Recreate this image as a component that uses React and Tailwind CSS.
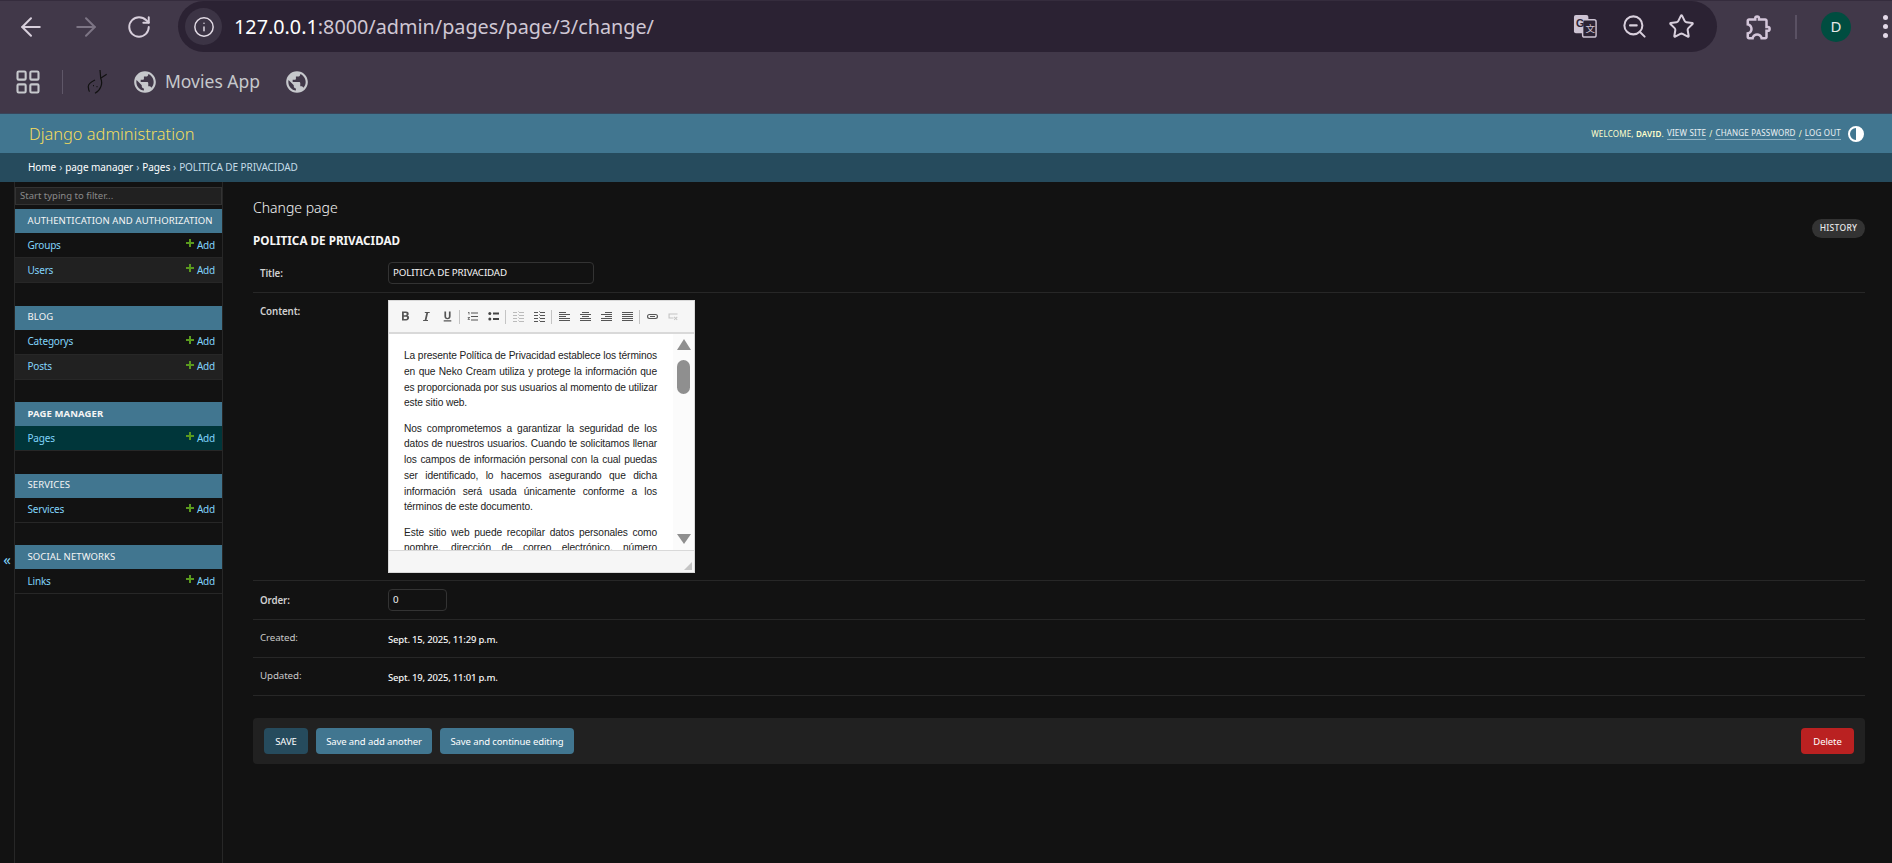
import React from 'react';
import { ArrowLeft, ArrowRight, RotateCw, Info, ZoomOut, Star, LayoutGrid } from 'lucide-react';
import { MdPublic, MdOutlineExtension } from 'react-icons/md';

const sections = [
  { name: 'Authentication and Authorization', models: ['Groups', 'Users'] },
  { name: 'Blog', models: ['Categorys', 'Posts'] },
  { name: 'Page manager', models: ['Pages'], current: true },
  { name: 'Services', models: ['Services'] },
  { name: 'Social Networks', models: ['Links'] },
];

// line breaks as in the editor, the last line of a paragraph is not stretched
const paragraphs = [
  {
    lines: [
      'La presente Política de Privacidad establece los términos',
      'en que Neko Cream utiliza y protege la información que',
      'es proporcionada por sus usuarios al momento de utilizar',
    ],
    last: 'este sitio web.',
  },
  {
    lines: [
      'Nos comprometemos a garantizar la seguridad de los',
      'datos de nuestros usuarios. Cuando te solicitamos llenar',
      'los campos de información personal con la cual puedas',
      'ser identificado, lo hacemos asegurando que dicha',
      'información será usada únicamente conforme a los',
    ],
    last: 'términos de este documento.',
  },
  {
    lines: [
      'Este sitio web puede recopilar datos personales como',
      'nombre, dirección de correo electrónico, número',
    ],
  },
];

const Sep = () => <span className="w-px h-[14px] bg-[#c4c4c4] mx-[1.5px] shrink-0" />;

const ToolIcon = ({ children, className = 'text-[#555]' }) => (
  <svg viewBox="0 0 11 11" className={`w-[11px] h-[11px] mx-[5px] shrink-0 ${className}`} fill="currentColor">
    {children}
  </svg>
);

const bars = (rows) => rows.map(([x, y, w], i) => <rect key={i} x={x} y={y} width={w} height="1" />);

const outdentRows = [[0, 1, 4], [0, 4, 4], [0, 7, 4], [0, 10, 4], [6, 1, 5], [6, 4, 5], [6, 7, 5], [6, 10, 5], [5, 0, 0.6], [5, 3, 0.6], [5, 6, 0.6], [5, 9, 0.6]];

const Toolbar = () => (
  <div className="h-[33px] shrink-0 bg-[#f6f6f6] border-b-2 border-[#d9d9d9] flex items-center pl-[5.5px]">
    <ToolIcon><path d="M2 .5h4c1.7 0 2.7.8 2.7 2.2 0 .9-.5 1.6-1.2 1.8 1 .2 1.6 1 1.6 2.1C9.100 8.300 8 9.500 6.100 9.500H2v-9zm1.800 1.500v2.200h1.700c.8 0 1.200-.4 1.200-1.100S6.300 2 5.500 2H3.800zm0 3.700v2.300h2c.8 0 1.300-.4 1.300-1.200s-.5-1.100-1.300-1.100h-2z" /></ToolIcon>
    <ToolIcon><path d="M3.800 1h4.900v1.100H7.100L5.500 8.900h1.500V10H2.100V8.900h1.600l1.600-6.800H3.800V1z" /></ToolIcon>
    <ToolIcon><path d="M2.400.5h1.700v4.700c0 1.100.5 1.700 1.400 1.700s1.400-.6 1.400-1.700V.5h1.700v4.800c0 2-1.200 3-3.100 3s-3.100-1-3.100-3V.5zM1.700 9.300h7.600v1.100H1.700z" /></ToolIcon>
    <Sep />
    <ToolIcon><path d="M1 1h1.400v2.400h-.8V1.700H1zM.7 6h2.200v.8L1.700 8h1.200v.8H.7V8l1.300-1.200H.7zM4 1.500h7v1H4zM4 5h7v1H4zM4 8.500h7v1H4z" /></ToolIcon>
    <ToolIcon className="text-[#444]"><circle cx="1.800" cy="2.500" r="1.500" /><circle cx="1.800" cy="8" r="1.500" /><rect x="5" y="1.500" width="6" height="2" /><rect x="5" y="7" width="6" height="2" /></ToolIcon>
    <Sep />
    <ToolIcon className="text-[#bbb]">{bars(outdentRows)}</ToolIcon>
    <ToolIcon>{bars(outdentRows)}</ToolIcon>
    <Sep />
    <ToolIcon>{bars([[0, 1, 7], [0, 3, 11], [0, 5, 7], [0, 7, 11], [0, 9, 11]])}</ToolIcon>
    <ToolIcon>{bars([[2, 1, 7], [0, 3, 11], [2, 5, 7], [0, 7, 11], [0, 9, 11]])}</ToolIcon>
    <ToolIcon>{bars([[4, 1, 7], [0, 3, 11], [4, 5, 7], [0, 7, 11], [0, 9, 11]])}</ToolIcon>
    <ToolIcon>{bars([[0, 1, 11], [0, 3, 11], [0, 5, 11], [0, 7, 11], [0, 9, 11]])}</ToolIcon>
    <Sep />
    <ToolIcon><path d="M2.500 3h6a2.500 2.500 0 0 1 0 5h-6a2.500 2.500 0 0 1 0-5zm0 1.100a1.400 1.400 0 0 0 0 2.800h6a1.400 1.400 0 0 0 0-2.800h-6zM3 5h5v1H3z" /></ToolIcon>
    <ToolIcon className="text-[#c4c4c4]"><path d="M.5 2.500h9v1.100H1.600v3H5.500v1H.5zM6.500 5.500l1.200 1.200 1.200-1.200.7.700-1.200 1.200 1.200 1.200-.7.700-1.200-1.200-1.200 1.200-.7-.7 1.200-1.200-1.200-1.200z" /></ToolIcon>
  </div>
);

const Editor = () => (
  <div className="w-[307px] h-[273px] bg-white border border-[#d9d9d9] flex flex-col">
    <Toolbar />
    <div className="flex-1 min-h-0 flex overflow-hidden">
      <div className="w-[284px] shrink-0 pl-[15px] pr-[16px] pt-[14px] text-[10.2px] tracking-[-0.1px] leading-[15.75px] text-[#222] font-['Liberation_Sans',sans-serif] overflow-hidden">
        {paragraphs.map((p) => (
          <p key={p.lines[0]} className="mb-[9.5px]">
            {p.lines.map((line) => (
              <span key={line} className="block whitespace-nowrap text-justify [text-align-last:justify]">{line}</span>
            ))}
            {p.last && <span className="block">{p.last}</span>}
          </p>
        ))}
      </div>
      <div className="flex-1 bg-[#fbfbfb] flex flex-col items-center pt-[5px] pb-[6px]">
        <span className="w-0 h-0 border-x-[7.5px] border-x-transparent border-b-[11px] border-b-[#8f8f8f]" />
        <span className="w-[13px] h-[34px] rounded-full bg-[#8f8f8f] mt-[10px]" />
        <span className="mt-auto w-0 h-0 border-x-[7.5px] border-x-transparent border-t-[10px] border-t-[#8f8f8f]" />
      </div>
    </div>
    <div className="h-[22px] shrink-0 bg-[#f6f6f6] border-t border-[#d9d9d9] flex items-end justify-end p-[2px]">
      <svg viewBox="0 0 8 8" className="w-[8px] h-[8px]"><polygon points="8,0 8,8 0,8" fill="#c4c4c4" /></svg>
    </div>
  </div>
);

const Row = ({ label, strong, labelPad, height, children }) => (
  <div className={`flex border-b border-[#272727] ${height}`}>
    <div className={`w-[135px] pl-[7px] text-[9.75px] tracking-[-0.1px] leading-[14px] shrink-0 ${labelPad} ${strong ? 'font-semibold text-[#d0d0d0]' : 'text-[#c8c8c8]'}`}>{label}</div>
    {children}
  </div>
);

const Field = ({ className, value }) => (
  <div className={`h-[22px] border border-[#333] rounded-[4px] px-[4px] flex items-center text-[9.75px] tracking-[-0.15px] text-[#f5f5f5] ${className}`}>{value}</div>
);

export default function App() {
  return (
    <div className="w-[1892px] h-[863px] overflow-hidden flex flex-col bg-[#121212] font-['Noto_Sans',sans-serif]">
      {/* browser chrome */}
      <div className="h-[57px] shrink-0 bg-[#413849] flex items-start border-t border-[#352c3d]">
        <div className="flex items-center h-[51px] text-[#d8cfdc]">
          <ArrowLeft size={30} strokeWidth={1.6} className="ml-[15.5px]" />
          <ArrowRight size={30} strokeWidth={1.6} className="ml-[25px] text-[#7d7585]" />
          <RotateCw size={26} strokeWidth={1.8} className="ml-[25.5px]" />
        </div>
        <div className="ml-[26px] w-[1539px] h-[51px] rounded-full bg-[#2b2233] flex items-center pl-[7px]">
          <div className="w-[37px] h-[37px] rounded-full bg-[#3c3445] flex items-center justify-center">
            <Info size={22} strokeWidth={1.6} className="text-[#e3dce6]" />
          </div>
          <div className="ml-[12px] text-[19.8px] leading-none">
            <span className="text-white">127.0.0.1</span>
            <span className="text-[#cfc7d4]">:8000/admin/pages/page/3/change/</span>
          </div>
          <svg viewBox="0 0 26 26" className="w-[25px] h-[25px] ml-auto">
            <rect x="1" y="1" width="15" height="19" rx="2" fill="#cdc3d3" />
            <rect x="10" y="6" width="14" height="18" rx="2" fill="#2b2233" stroke="#cdc3d3" strokeWidth="1.5" />
            <text x="3" y="14" fontSize="11" fontWeight="700" fill="#2b2233" fontFamily="'Liberation Sans',sans-serif">G</text>
            <text x="13" y="19" fontSize="10" fill="#cdc3d3" fontFamily="'Noto Sans CJK SC',sans-serif">文</text>
          </svg>
          <ZoomOut size={27} strokeWidth={1.8} className="ml-[23px] text-[#d8cfdc]" />
          <Star size={27} strokeWidth={1.8} className="ml-[20px] mr-[22px] text-[#d8cfdc]" />
        </div>
        <div className="flex items-center h-[51px]">
          <MdOutlineExtension size={30} className="ml-[27px] text-[#d4c6da]" />
          <span className="w-[2px] h-[24px] bg-[#5a5163] ml-[21px]" />
          <span className="ml-[24px] w-[30px] h-[30px] rounded-full bg-[#004d40] text-[#e8e8e8] text-[15px] flex items-center justify-center">D</span>
          <span className="ml-[32px] flex flex-col gap-[4px]">
            <span className="w-[5px] h-[5px] rounded-full bg-[#e3d9e8]" />
            <span className="w-[5px] h-[5px] rounded-full bg-[#e3d9e8]" />
            <span className="w-[5px] h-[5px] rounded-full bg-[#e3d9e8]" />
          </span>
        </div>
      </div>
      <div className="h-[56px] shrink-0 bg-[#413849] flex items-center pb-[6px] text-[#c6c8cc]">
        <LayoutGrid size={28} strokeWidth={1.8} className="ml-[14px]" />
        <span className="w-px h-[24px] bg-[#5f5768] ml-[20px]" />
        <svg viewBox="0 0 20 24" className="w-[20px] h-[24px] ml-[24px]" fill="none" stroke="#111" strokeWidth="1.2">
          <path d="M13 0 13.700 8.300 19.700 4.300M13.700 8.300C16 13 14 20 8 23.300M8 10C4 12 1 15 1.300 17 1.500 19.500 2 21 2.500 21.700M6 15.700h1M9.500 16.700h1" />
        </svg>
        <MdPublic size={26} className="ml-[25px]" />
        <span className="ml-[7px] text-[17.5px] leading-none">Movies App</span>
        <MdPublic size={26} className="ml-[24px]" />
      </div>

      {/* admin header */}
      <div className="h-[40px] shrink-0 bg-[#417690] border-t border-[#39455a] flex items-center pl-[29px] pr-[28px]">
        <span className="text-[16.4px] font-light text-[#f5dd5d] leading-none pt-[1px]">Django administration</span>
        <div className="ml-auto flex items-center text-[8px] tracking-[0.2px] text-[#ffffcc] uppercase">
          <span>Welcome, <strong className="font-semibold">David</strong>.</span>
          <span className="ml-[3px] text-white/90 border-b border-[#c4dce8]/60">View site</span>
          <span className="mx-[3px]">/</span>
          <span className="text-white/90 border-b border-[#c4dce8]/60">Change password</span>
          <span className="mx-[3px]">/</span>
          <span className="text-white/90 border-b border-[#c4dce8]/60">Log out</span>
          <span className="ml-[7px] w-[16px] h-[16px] rounded-full border-2 border-white bg-[linear-gradient(to_right,transparent_50%,#fff_50%)]" />
        </div>
      </div>
      <div className="h-[29px] shrink-0 bg-[#264b5d] flex items-center pl-[28px] text-[10px] tracking-[-0.07px] text-[#c4dce8]">
        <span className="text-white">Home</span>
        <span className="mx-[3px]">›</span>
        <span className="text-white">page manager</span>
        <span className="mx-[3px]">›</span>
        <span className="text-white">Pages</span>
        <span className="mx-[3px]">›</span>
        <span>POLITICA DE PRIVACIDAD</span>
      </div>

      <div className="flex-1 min-h-0 flex">
        {/* nav toggler */}
        <div className="w-[15px] shrink-0 border-r border-[#272727] flex justify-center pt-[370px] text-[#81d4fa] text-[15px] leading-none">«</div>

        {/* sidebar */}
        <div className="w-[208px] shrink-0 border-r border-[#272727] pt-[5px]">
          <div className="h-[18px] bg-[#212121] border border-[#333] flex items-center pl-[4px] text-[9.5px] text-[#8a8a8a]">Start typing to filter...</div>
          <div className="mt-[4px] flex flex-col gap-[22.5px]">
            {sections.map((s) => (
              <div key={s.name}>
                <div className={`h-[24px] bg-[#417690] flex items-center pl-[12.5px] text-[9.5px] tracking-[0.1px] whitespace-nowrap uppercase text-[#f5f5f5] ${s.current ? 'font-bold' : ''}`}>{s.name}</div>
                {s.models.map((m, i) => (
                  <div key={m} className={`h-[25px] border-b border-[#272727] flex items-center pl-[12.5px] pr-[7px] text-[10px] tracking-[-0.2px] text-[#81d4fa] ${s.current ? 'bg-[#00363a]' : i % 2 ? 'bg-[#212121]' : ''}`}>
                    <span>{m}</span>
                    <svg viewBox="0 0 8 8" className="w-[8px] h-[8px] ml-auto mb-[4px] mr-[3px]" fill="#5a9a1e"><path d="M3 0h2v3h3v2H5v3H3V5H0V3h3z" /></svg>
                    <span>Add</span>
                  </div>
                ))}
              </div>
            ))}
          </div>
        </div>

        {/* main content */}
        <div className="flex-1 min-w-0 pl-[30px] pr-[27px]">
          <h1 className="mt-[16px] text-[14px] font-light leading-[20px] text-[#f5f5f5]">Change page</h1>
          <div className="mt-px flex items-start justify-between h-[37px]">
            <h2 className="mt-[13px] text-[11.7px] leading-[16px] font-bold text-[#f5f5f5]">POLITICA DE PRIVACIDAD</h2>
            <span className="h-[19px] w-[53px] rounded-full bg-[#333] flex items-center justify-center text-[8.5px] tracking-[0.3px] font-medium text-[#e8e8e8]">HISTORY</span>
          </div>
          <Row label="Title:" strong labelPad="pt-[11px]" height="h-[37px]">
            <div className="pt-[6px]"><Field className="w-[206px]" value="POLITICA DE PRIVACIDAD" /></div>
          </Row>
          <Row label="Content:" strong labelPad="pt-[12px]" height="h-[288px]">
            <div className="pt-[7px]"><Editor /></div>
          </Row>
          <Row label="Order:" strong labelPad="pt-[13px]" height="h-[39px]">
            <div className="pt-[8px]"><Field className="w-[59px]" value="0" /></div>
          </Row>
          {[['Created:', 'Sept. 15, 2025, 11:29 p.m.'], ['Updated:', 'Sept. 19, 2025, 11:01 p.m.']].map(([l, v]) => (
            <Row key={l} label={l} labelPad="pt-[11px]" height="h-[38px]">
              <div className="pt-[13px] text-[9.5px] leading-[14px] font-medium tracking-[-0.2px] text-[#f5f5f5]">{v}</div>
            </Row>
          ))}
          <div className="mt-[22px] h-[46px] bg-[#212121] rounded-[4px] flex items-center px-[11px] gap-[8px] text-[9.5px] tracking-[-0.1px] text-white">
            <span className="h-[26px] w-[44px] pt-[2px] rounded-[4px] bg-[#264b5d] flex items-center justify-center">SAVE</span>
            <span className="h-[26px] w-[116px] pt-[2px] rounded-[4px] bg-[#417690] flex items-center justify-center">Save and add another</span>
            <span className="h-[26px] w-[134px] pt-[2px] rounded-[4px] bg-[#417690] flex items-center justify-center">Save and continue editing</span>
            <span className="ml-auto h-[26px] w-[53px] pt-[2px] rounded-[4px] bg-[#ba2121] flex items-center justify-center">Delete</span>
          </div>
        </div>
      </div>
    </div>
  );
}
